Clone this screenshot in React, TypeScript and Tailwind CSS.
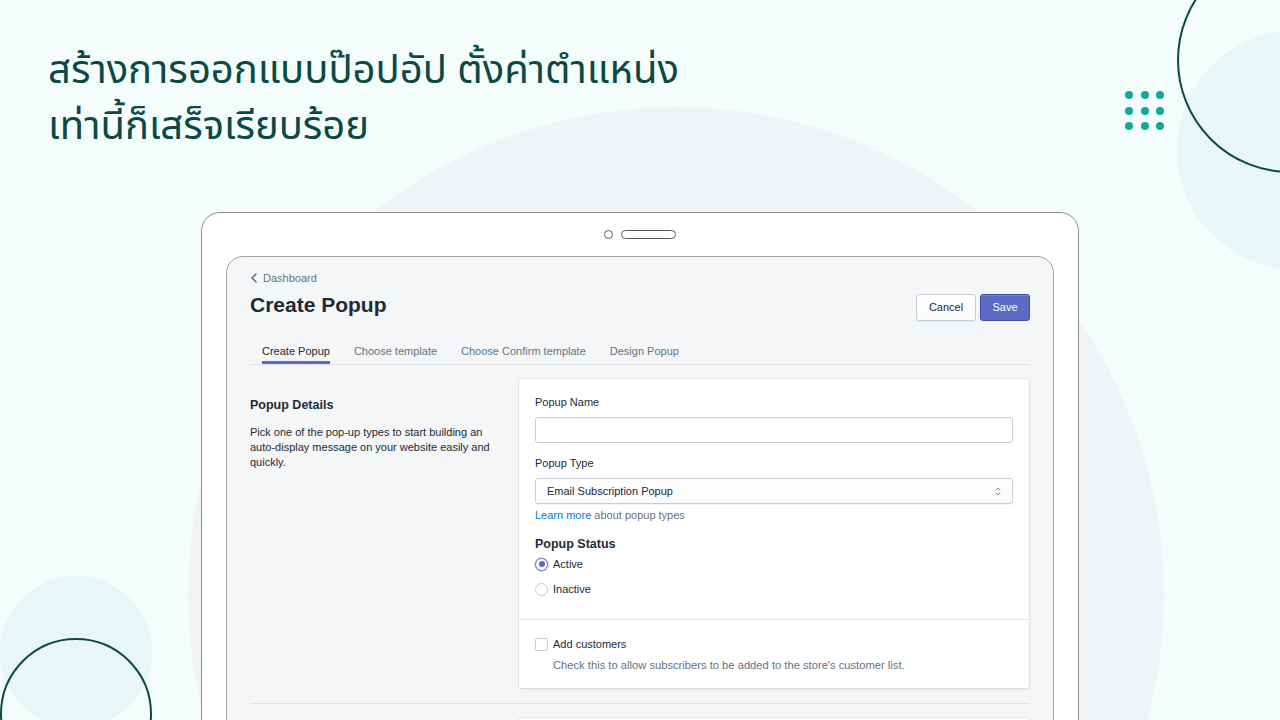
import React from "react";

const ui = { fontFamily: '"Liberation Sans", Arial, sans-serif' };
const thai = { fontFamily: '"Noto Sans Thai", "Noto Sans", "Noto Sans CJK SC", sans-serif' };

function Dots() {
  const items = Array.from({ length: 9 });
  return (
    <div className="absolute left-[1125px] top-[91px] grid grid-cols-3 gap-[7.5px]">
      {items.map((_, i) => (
        <div key={i} className="w-[8px] h-[8px] rounded-full bg-[#12a79d]" />
      ))}
    </div>
  );
}

function Radio({ checked, label }: { checked?: boolean; label: string }) {
  return (
    <div className="flex items-center gap-[5px] h-[16px]">
      <div
        className={
          checked
            ? "w-[13px] h-[13px] rounded-full border border-[#5c6ac4] bg-white flex items-center justify-center shadow-[0_0_0_1px_rgba(92,106,196,0.25)]"
            : "w-[13px] h-[13px] rounded-full border border-[#c4cdd5] bg-white"
        }
      >
        {checked && <div className="w-[6px] h-[6px] rounded-full bg-[#5c6ac4]" />}
      </div>
      <span className="text-[11px] text-[#212b36]">{label}</span>
    </div>
  );
}

export default function App() {
  return (
    <div className="relative w-[1280px] h-[720px] overflow-hidden bg-[#f4fdfc]" style={ui}>
      {/* decorative shapes */}
      <div className="absolute left-[188px] top-[107px] w-[976px] h-[976px] rounded-full bg-[#f1f4f6]" />
      <div className="absolute left-[1177px] top-[30px] w-[240px] h-[240px] rounded-full bg-[#e8f7f6]" />
      <div className="absolute left-[1177px] top-[-53px] w-[226px] h-[226px] rounded-full border-2 border-[#0b4a44]" />
      <div className="absolute left-0 top-[576px] w-[152px] h-[152px] rounded-full bg-[#e8f7f6]" />
      <div className="absolute left-0 top-[638px] w-[152px] h-[152px] rounded-full border-2 border-[#0b4a44]" />
      <Dots />

      <div className="relative">
        {/* heading */}
        <div className="h-[212px] pl-[48px] pt-[43px]">
          <h1 className="text-[40px] leading-[56px] text-[#0b4a44] font-normal" style={thai}>
            สร้างการออกแบบป๊อปอัป ตั้งค่าตำแหน่ง
            <br />
            เท่านี้ก็เสร็จเรียบร้อย
          </h1>
        </div>

        {/* tablet */}
        <div className="ml-[201px] w-[878px] h-[520px] rounded-t-[19px] border border-[#8e8e8e] bg-white px-[24px]">
          <div className="h-[43px] flex items-center justify-center gap-[8px]">
            <div className="w-[9px] h-[9px] rounded-full border border-[#555]" />
            <div className="w-[55px] h-[9px] rounded-full border border-[#555]" />
          </div>
          <div className="h-[470px] rounded-t-[17px] border border-[#a3a3a3] bg-[#f4f6f8] px-[23px] pt-[13px]">
            {/* breadcrumb */}
            <div className="flex items-center gap-[5px] h-[16px] text-[11px] text-[#637381]">
              <svg width="8" height="10" viewBox="0 0 8 10" fill="none">
                <path d="M6 1L2 5l4 4" stroke="#637381" strokeWidth="1.6" strokeLinecap="round" strokeLinejoin="round" />
              </svg>
              <span>Dashboard</span>
            </div>
            {/* title row */}
            <div className="mt-[4px] h-[32px] flex items-center justify-between">
              <h2 className="text-[21px] font-bold text-[#212b36] -mt-[2px]">Create Popup</h2>
              <div className="flex gap-[4px] pt-[2px]">
                <button className="w-[60px] h-[27px] rounded-[3px] border border-[#c4cdd5] bg-gradient-to-b from-white to-[#f9fafb] text-[11px] text-[#212b36] shadow-[0_1px_0_rgba(22,29,37,0.05)]">
                  Cancel
                </button>
                <button className="w-[50px] h-[27px] rounded-[3px] border border-[#3f4eae] bg-[#5c6ac4] text-[11px] text-white shadow-[inset_0_1px_0_rgba(255,255,255,0.2)]">
                  Save
                </button>
              </div>
            </div>
            {/* tabs */}
            <div className="mt-[16px] flex border-b border-[#dfe3e8] text-[11px]">
              {["Create Popup", "Choose template", "Choose Confirm template", "Design Popup"].map((t, i) => (
                <div
                  key={t}
                  className={
                    i === 0
                      ? "mx-[12px] h-[26px] flex items-center border-b-[3px] border-[#5c6ac4] text-[#212b36] pt-[3px]"
                      : "mx-[12px] h-[26px] flex items-center border-b-[3px] border-transparent text-[#637381] pt-[3px]"
                  }
                >
                  {t}
                </div>
              ))}
            </div>
            {/* section */}
            <div className="mt-[14px] flex">
              <div className="w-[269px] pr-[21px] pt-[18px]">
                <div className="text-[12.5px] font-bold text-[#212b36] leading-[16px]">Popup Details</div>
                <p className="mt-[12px] text-[11px] leading-[15px] text-[#212b36]">
                  Pick one of the pop-up types to start building an auto-display message on your website easily and quickly.
                </p>
              </div>
              <div className="w-[510px] bg-white rounded-[3px] shadow-[0_0_0_1px_rgba(63,63,68,0.05),0_1px_3px_0_rgba(63,63,68,0.15)]">
                <div className="px-[16px] pt-[16px] pb-[22px]">
                  <div className="text-[11px] leading-[14px] text-[#212b36]">Popup Name</div>
                  <div className="mt-[8px] h-[26px] rounded-[3px] border border-[#c4cdd5] bg-white shadow-[inset_0_1px_0_rgba(99,115,129,0.05)]" />
                  <div className="mt-[13px] text-[11px] leading-[14px] text-[#212b36]">Popup Type</div>
                  <div className="mt-[8px] h-[26px] rounded-[3px] border border-[#c4cdd5] bg-gradient-to-b from-white to-[#f9fafb] flex items-center justify-between pl-[11px] pr-[11px] shadow-[0_1px_0_rgba(22,29,37,0.05)]">
                    <span className="text-[11px] text-[#212b36]">Email Subscription Popup</span>
                    <svg width="6" height="9" viewBox="0 0 6 9" fill="none">
                      <path d="M1 3.2L3 1.2l2 2" stroke="#637381" strokeWidth="1" />
                      <path d="M1 5.8l2 2 2-2" stroke="#637381" strokeWidth="1" />
                    </svg>
                  </div>
                  <div className="mt-[4px] text-[11px] leading-[14px]">
                    <span className="text-[#007ace]">Learn more</span>
                    <span className="text-[#637381]"> about popup types</span>
                  </div>
                  <div className="mt-[14px] text-[12.5px] font-bold leading-[16px] text-[#212b36]">Popup Status</div>
                  <div className="mt-[4px]">
                    <Radio checked label="Active" />
                  </div>
                  <div className="mt-[9px]">
                    <Radio label="Inactive" />
                  </div>
                </div>
                <div className="border-t border-[#dfe3e8] px-[16px] pt-[16px] pb-[16px]">
                  <div className="flex items-center gap-[5px] h-[16px]">
                    <div className="w-[13px] h-[13px] rounded-[2px] border border-[#c4cdd5] bg-white" />
                    <span className="text-[11px] text-[#212b36]">Add customers</span>
                  </div>
                  <div className="mt-[6px] pl-[18px] text-[11.2px] leading-[14px] text-[#637381]">
                    Check this to allow subscribers to be added to the store's customer list.
                  </div>
                </div>
              </div>
            </div>
            <div className="mt-[15px] border-t border-[#dfe3e8]" />
            <div className="mt-[14px] ml-[269px] w-[510px] h-[40px] bg-white rounded-[3px] shadow-[0_0_0_1px_rgba(63,63,68,0.05),0_1px_3px_0_rgba(63,63,68,0.15)]" />
          </div>
        </div>
      </div>
    </div>
  );
}
